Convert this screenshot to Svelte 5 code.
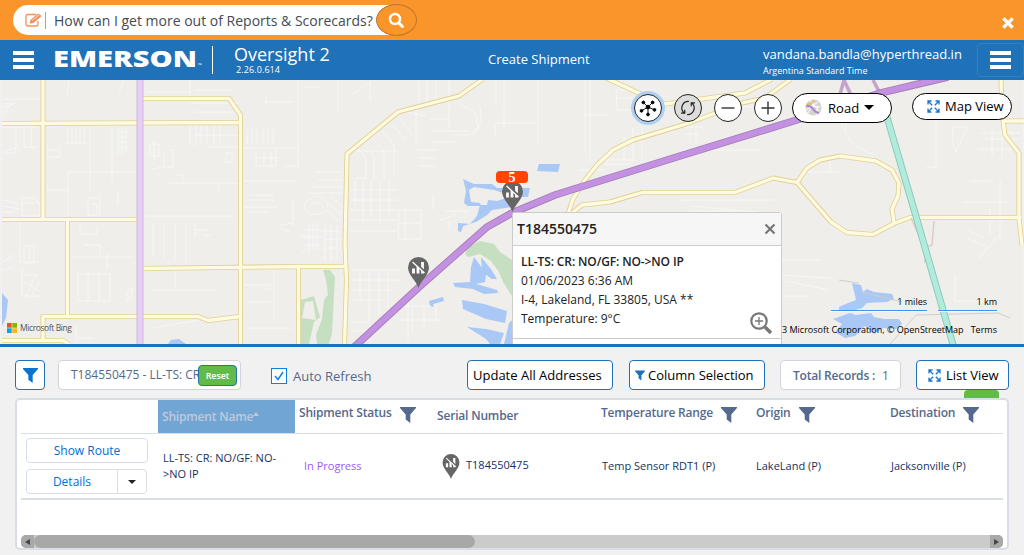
<script>
  const minor = [
    'M2 99H40M2 104L17 103M2 108L14 104M2 113L10 105M2 117L8 110M2 127H38M2 152L16 148V128M24 128V147H37M31 128V147M17 148L14 153H3',
    'M69 80L67 96M124 80L119 92M68 128V143M72 128V143M76 128V143M80 128V143M84 128V143M66 143H87M118 128V155M122 128V155M118 132H126M118 137H126M118 142H126M118 147H126M126 128V152',
    'M46 150H60V157H47M68 172H137M90 128V190M68 172V216M112 128V182M46 190H67M118 190V205M88 198H100V215H88ZM92 204H97V214M22 198H35L40 205V216H22ZM22 203H35M3 200L19 204M3 206L19 209M3 212H15',
    'M24 246H34V263H24ZM20 222V262H39M29 246V263M3 262L15 254M3 271L14 266M22 268V296H40M22 275H38M22 280L40 292M25 297L36 275M30 299L40 281M80 225V234H97V226M72 257H134M84 245H100V256M107 253V269M78 274H110V301H78ZM88 274V301M99 274V301M127 302L132 294V288L126 294ZM76 325V338H93',
    'M146 92H190M190 80V95M196 90H230M150 144H159V156H150ZM154 140V160M168 150H173V167H164V152M175 175H183V183H175M169 183H238M145 216H234M153 223V256M164 223V258M175 223V262M186 223V264M195 223V237M196 230H210M204 235H211M219 183V190M150 170L165 166M226 153H232V162H226ZM150 290H215M175 270V288M153 328L198 320',
    'M190 124V144H196V124M201 124V144M207 124V144M214 124V144M220 124V144M208 147H238M194 135H238M190 103H238M195 112H232',
    'M247 129V144M252 129V144M257 129V144M263 129V144M268 129V144M273 129V144M244 148H297M256 151V166H276V150M264 151V166M271 151V166M257 158H277M298 80V168M298 166H285M244 181H297M246 200H273M244 207H278M248 212H268M250 195H274M266 105V97M265 102H292M305 87H319M338 80V110',
    'M293 200V225M280 225L293 223M280 228L290 232M315 172H342M318 180H343M312 187H342M308 193H343M306 202C312 195 318 194 326 201C331 206 326 214 318 214C310 216 300 210 306 202M310 205C316 201 321 202 323 207M330 196L343 207M329 204L342 215M327 211L340 222',
    'M309 223V255M313 223V250M317 223V250M302 230H322M302 237H322M302 245H320M325 225V260M331 225V260M337 225V260M322 231H341M324 239H341M323 248H341M300 236H311M302 253L310 243M244 285H270M274 270V320M264 289H272M248 302H270M246 328H292',
    'M351 95L370 82V101M350 151H398M359 149L366 158V178H356M364 145L374 155V181M372 138L384 151V180M382 131L394 145V176M392 124L405 140M400 118L412 134M406 112L425 116M419 82V105M427 80V105M436 80V102M449 80V128M459 103L475 113L478 127L470 135H454M478 103C484 112 480 133 471 137',
    'M416 105V143M430 119H449M431 131H468M431 142H455M417 150H437M420 158H435M419 166H435M350 190H397M350 200H397M350 210H397M350 220H397M350 231H397M355 181V205M363 181V222M371 181V216M380 181V225M389 181V215M399 210H421V239H398ZM399 223H421M405 210V239',
    'M352 270H402M352 280H400M352 290H390M352 300H385M360 270V300M369 270V320M379 270V315M388 270V309M350 322H370M353 331H366M408 299V341M400 306H436M400 320H440M412 307V334M424 307V327M436 305V320M440 220L457 214M445 211H468M449 221V230M433 195V210',
    'M496 80V106M504 80V130M538 80V145M495 137V123H536M585 80V153M590 80V163M584 115H610M616 90H637V110H617ZM617 98H636M603 160H635M605 164H632M580 170H604M624 137V159M633 128V160M642 128V160',
    'M682 127H703M684 134H699M690 130V143M696 130V143M682 150H760M724 105L765 108M842 119C842 139 861 152 874 154M846 119V132M885 123L895 153M830 160V172M805 172H840M680 200H774M680 212L718 220M782 260H820M782 275L830 278M786 281L829 290M782 296H810',
    'M690 206L758 212M690 211H740M936 96V167H926M953 127H967L956 152L952 139ZM981 133H1020M985 139H1019M979 149H1018M992 131V156M1002 131V158M971 181H990M963 202H1009M1000 180V240M967 230L984 238M968 239L986 246M990 209V235M1000 234L978 259M955 275V301H990'
  ];
  const roads = [
    'M43 78V219M2 123.5L240 122.5M2 219.500H138M67.500 219V316M43 339V316.500H198L208 320.500L240 316.500M2 340.500H63L70 345M141 98.500H229L240.500 115V345M141 268.500L299 266.500H346M298.500 267V345M344.500 345L346.500 280L345 245L347 154L398 112L459 96L483 79',
    'M606 78L643 95L665 104L745 93L772 79M568 214L573 199L585 180L597 165L613 150L633 140L686 124L742 103L765 98L791 79M571 214L582 205L610 202L642 192.500H735L773 178L797 182.500L807 168L820 160L840 156L876 161L892 170L899 183L898 196L892 209L894 222M797 182.500L831 222L847 232.500L873 234.500L895 223L910 217.500H1021M1001 79L1002 119M1025 121H1003L1005 135L1019 153V218L1022 245'
  ];
  const columns = [
    { t: 'Shipment Status', w: 138, f: true },
    { t: 'Serial Number', w: 164, f: false },
    { t: 'Temperature Range', w: 155, f: true },
    { t: 'Origin', w: 134, f: true },
    { t: 'Destination', w: 110, f: true }
  ];
</script>

{#snippet pin()}
  <svg class="pin" viewBox="0 0 21 31"><path d="M10.500 31C9 25 0 18 0 10.500A10.500 10.500 0 0 1 21 10.500C21 18 12 25 10.500 31Z" fill="#666"/><path d="M5.500 11.500V16.500M10 9V16.500M14.500 5V16.500" stroke="#fff" stroke-width="2.800"/><path d="M5 4L18 16" stroke="#666" stroke-width="2.400"/><path d="M4.500 5L16.500 16" stroke="#fff" stroke-width="1.300"/></svg>
{/snippet}
{#snippet funnel()}
  <svg class="funnel" viewBox="0 0 16 16"><path d="M0 0H16V1L10.300 7.500V16L5.700 12.500V7.500L0 1Z" fill="currentColor"/></svg>
{/snippet}
{#snippet expand()}
  <svg class="expand" viewBox="0 0 13 13" fill="none" stroke="#1c76c4" stroke-width="1.300"><path d="M1 4.500V1H4.500M1 1L5.200 5.200M8.500 1H12V4.500M12 1L7.800 5.200M1 8.500V12H4.500M1 12L5.200 7.800M8.500 12H12V8.500M12 12L7.800 7.800"/></svg>
{/snippet}

<div class="app">
  <header class="banner">
    <div class="ask">
      <svg class="edit" viewBox="0 0 17 15" fill="none" stroke="#f5905a"><path d="M11 1.500H3Q1 1.500 1 3.500V11Q1 13 3 13H11Q13 13 13 11V8" stroke-width="1.300"/><path d="M5 10L6 7L13 1L16 3L8.500 9.500Z" fill="#f5905a"/><path d="M7 7.500L14 2" stroke="#fff" stroke-width=".7"/></svg>
      <i></i><span>How can I get more out of Reports &amp; Scorecards?</span>
    </div>
    <button class="search" aria-label="Search"><svg width="17" height="17" viewBox="0 0 17 17" fill="none" stroke="#fff"><circle cx="7" cy="7" r="5" stroke-width="2.500"/><path d="M11 11L14.500 14.500" stroke-width="3" stroke-linecap="round"/></svg></button>
    <svg class="dismiss" viewBox="0 0 12 12"><path d="M2.500 2.500L9.500 9.500M9.500 2.500L2.500 9.500" stroke="#fff" stroke-width="3.300" stroke-linecap="square"/></svg>
  </header>

  <nav>
    <div class="burger"><b></b><b></b><b></b></div>
    <svg class="logo" viewBox="0 0 150 24"><text x="-1" y="18.500" textLength="144" lengthAdjust="spacingAndGlyphs">EMERSON</text><text class="tm" x="144" y="18.500">™</text></svg>
    <div class="product"><span>Oversight 2</span><small>2.26.0.614</small></div>
    <div class="create">Create Shipment</div>
    <div class="user"><span>vandana.bandla@hyperthread.in</span><small>Argentina Standard Time</small></div>
    <div class="menu"><div class="burger"><b></b><b></b><b></b></div></div>
  </nav>

  <main class="map">
    <svg class="canvas" viewBox="0 80 1024 264" fill="none">
      <rect x="2" y="80" width="1020" height="264" fill="#efeeeb"/>
      <g stroke="#f8f7f5" stroke-width="1">{#each minor as d}<path {d}/>{/each}</g>
      <g fill="#c5dfc0">
        <path d="M323 270L330 270L335 277L334 295L333 315L332 333L329 344H317L316 335L322 319L324 300L328 295L326 280ZM301 300L314 296L317 307L320 317L314 322L309 344H300ZM305 302L302 318L316 320L313 301Z" fill-rule="evenodd"/>
        <path d="M465 254L468 247L480 241L494 244L500 252L512 260V296L503 282L499 272L491 261L480 254L468 257Z"/>
      </g>
      <g fill="#a9c8f5">
        <path d="M2 293L8 300L6 318L2 326ZM168 344L171 340L179 339L186 344ZM539 164L560 164L558 172L537 171Z"/>
        <path d="M463 179L474 184L492 184L497 188H505L503 193L494 190L474 187L469 190L471 202L480 203L481 206L468 206L464 203L466 191ZM488 200L497 201L512 196L512 207L505 208L492 210L487 215L476 222L463 226L461 232L458 231V223L470 224L477 216L480 205L487 205ZM520 188H530L528 197H519Z"/>
        <path d="M474 257L480 265L486 275L485 282L476 284L497 290L498 293L484 294L473 289L455 287L453 283L470 282L471 267ZM481 257L491 269L497 279L492 279L482 272ZM429 301L443 297L444 301L433 304L434 307L430 306ZM462 300L484 304L507 311L505 323L486 319L463 309ZM467 327L486 329L504 333L500 344H490L486 339ZM509 323L512 320V344L504 344Z"/>
        <path d="M852 283L861 285L863 292L867 289L874 292L892 294L894 299L887 302L867 303L862 308L852 311L839 310V307L848 303L856 300ZM833 319L850 313L856 315L871 313L874 317L884 319L899 319L902 324L896 329L883 328L874 334L865 326L855 336L845 338L835 332L842 324Z"/>
      </g>
      <path d="M839 280L859 283M862 292L902 302M890 344L916 315L998 313L1010 318" stroke="#d0cfcc"/>
      <g stroke-linejoin="round">
        <g stroke="#e0cf96" stroke-width="5">{#each roads as d}<path {d}/>{/each}</g>
        <g stroke="#fffbdc" stroke-width="3.300">{#each roads as d}<path {d}/>{/each}</g>
      </g>
      <path d="M140 80V344" stroke="#d2b7df" stroke-width="7"/><path d="M140 80V344" stroke="#e6cef5" stroke-width="5"/>
      <path d="M844 80L839 98M844 80L851 95M873 80L882 97" stroke="#c5a3cd" stroke-width="3.500"/>
      <path d="M911 218L925 248L932 245L934 221M925 248V263" stroke="#e0cbc4" stroke-width="1.500"/>
      <path d="M882 100L915 213L954 348" stroke="#85c8b8" stroke-width="7"/><path d="M882 100L915 213L954 348" stroke="#b1ebdc" stroke-width="5.200"/>
      <path d="M351 350L418 288L487 227L512 213L555 195L680 156L800 119L880 93L948 77" stroke="#a580b9" stroke-width="7.500"/><path d="M351 350L418 288L487 227L512 213L555 195L680 156L800 119L880 93L948 77" stroke="#c491e2" stroke-width="5.600"/>
    </svg>

    <div class="at pin-a">{@render pin()}</div>
    <div class="at pin-b">{@render pin()}</div>
    <div class="at count">5</div>

    <div class="at tools">
      <div class="round focus"><svg viewBox="0 0 28 28" stroke="#000" fill="#000"><path d="M14 13L9 8M14 13L19 8M14 13L7 17M14 13L21 16M14 13V21"/><circle cx="14" cy="13" r="2"/><circle cx="9" cy="8" r="1.500"/><circle cx="19" cy="8" r="1.500"/><circle cx="7" cy="17" r="1.500"/><circle cx="21" cy="16" r="1.500"/><circle cx="14" cy="21" r="1.500"/></svg></div>
      <div class="round grey"><svg viewBox="0 0 28 28" stroke="#222" stroke-width="1.300" fill="none"><path d="M15 7A7 7 0 0 0 9.500 19M6.500 19.500H10.500V16M13 21A7 7 0 0 0 18.500 9M21.500 8.500H17.500V12"/></svg></div>
      <div class="round"><svg viewBox="0 0 28 28" stroke="#333" stroke-width="1.500"><path d="M7 14H21"/></svg></div>
      <div class="round"><svg viewBox="0 0 28 28" stroke="#333" stroke-width="1.500"><path d="M7 14H21M14 7V21"/></svg></div>
      <div class="pill road"><svg width="17" height="17" viewBox="0 0 17 17" fill="none"><circle cx="8.500" cy="8.500" r="8" fill="#d8d2cc"/><path d="M5 1L14 12M1 11L13 3M9 1L7 7L15 8M3 14L7 8M11 16L13 7" stroke="#fff" stroke-width="1"/><path d="M2 5Q7 6 9 1" stroke="#f0b65f" stroke-width="1.800"/><path d="M1 7Q5 6 8 10T14 14" stroke="#a987cf" stroke-width="2"/></svg><span>Road</span><em></em></div>
      <div class="pill view">{@render expand()}<span>Map View</span></div>
    </div>

    <div class="at info">
      <div class="info-head"><b>T184550475</b><svg width="12" height="12" viewBox="0 0 12 12"><path d="M1.500 1.500L10.500 10.500M10.500 1.500L1.500 10.500" stroke="#777" stroke-width="2.200"/></svg></div>
      <div class="info-body">
        <strong>LL-TS: CR: NO/GF: NO-&gt;NO IP</strong><p>01/06/2023 6:36 AM</p><p>I-4, Lakeland, FL 33805, USA **</p><p>Temperature: 9°C</p>
        <svg class="zoom" viewBox="0 0 22 22" fill="none" stroke="#777"><circle cx="9" cy="9" r="7.700" stroke-width="2.200"/><path d="M5 9H13M9 5V13" stroke-width="1.300"/><path d="M15 15L21 21" stroke-width="3.500"/></svg>
      </div>
    </div>

    <div class="at bing"><svg width="10" height="10"><path fill="#f25022" d="M0 0H4.700V4.700H0z"/><path fill="#7fba00" d="M5.300 0H10V4.700H5.300z"/><path fill="#00a4ef" d="M0 5.300H4.700V10H0z"/><path fill="#ffb900" d="M5.300 5.300H10V10H5.300z"/></svg><span>Microsoft Bing</span></div>
    <div class="at scale"><span class="mi">1 miles</span><span class="km">1 km</span></div>
    <div class="at credit"><span>3 Microsoft Corporation, © OpenStreetMap</span><span>Terms</span></div>
  </main>

  <section class="panel">
    <div class="bar">
      <div class="box filter">{@render funnel()}</div>
      <div class="box field"><span>T184550475 - LL-TS: CR</span><button>Reset</button></div>
      <div class="check"><svg width="16" height="16" viewBox="0 0 16 16" fill="#fff" stroke="#0d80e4"><rect x=".5" y=".5" width="15" height="15"/><path d="M4 8L7 11.500L12 4" stroke-width="1.500"/></svg><span>Auto Refresh</span></div>
      <div class="box update">Update All Addresses</div>
      <div class="box cols">{@render funnel()}<span>Column Selection</span></div>
      <div class="box total"><b>Total Records :</b><span>1</span></div>
      <div class="box list">{@render expand()}<span>List View</span></div>
    </div>
    <div class="tab"></div>
    <div class="table">
      <div class="head">
        <div class="blank"></div>
        <div class="sorted"><span>Shipment Name</span><em></em></div>
        {#each columns as c}
          <div class="th" class:plain={!c.f} style="width:{c.w}px"><span>{c.t}</span>{#if c.f}{@render funnel()}{/if}</div>
        {/each}
      </div>
      <div class="row">
        <div class="actions"><div class="act">Show Route</div><div class="act split"><span>Details</span><i><em></em></i></div></div>
        <div class="name">LL-TS: CR: NO/GF: NO-<br>&gt;NO IP</div>
        <div class="status">In Progress</div>
        <div class="serial">{@render pin()}<span>T184550475</span></div>
        <div class="temp">Temp Sensor RDT1 (P)</div>
        <div class="origin">LakeLand (P)</div>
        <div>Jacksonville (P)</div>
      </div>
      <div class="scroll"><i class="arrow l"></i><div class="thumb"></div><i class="arrow r"></i></div>
    </div>
  </section>
</div>

<style>
  :global(body) { margin: 0; }
  * { box-sizing: border-box; }
  .app { width: 1024px; height: 555px; overflow: hidden; background: #f1f1f1; font-family: "Open Sans", sans-serif; font-size: 13px; color: #000; display: flex; flex-direction: column; white-space: nowrap; }
  svg { display: block; flex: none; }
  button { font-family: inherit; }
  .banner { height: 40px; background: #f9952b; display: flex; align-items: center; padding-left: 13px; }
  .ask { width: 380px; height: 30px; background: #fff; border-radius: 15px 0 0 15px; display: flex; align-items: center; padding-left: 12px; color: #444b52; font-size: 14px; }
  .edit { width: 17px; height: 15px; }
  .ask i { width: 1px; height: 17px; background: #f5905a; margin: 0 8px 0 3px; }
  .search { width: 41px; height: 32px; margin-left: -17px; padding: 1px 0 0 11px; border: 1px solid #bd772b; border-radius: 50%; background: #f9952b; }
  .dismiss { width: 12px; height: 12px; margin: 5px 10px 0 auto; }
  nav { height: 40px; background: #1f71b8; color: #fff; display: flex; align-items: center; padding-left: 13px; }
  .burger { width: 21px; height: 18px; display: flex; flex-direction: column; justify-content: space-between; }
  .burger b { height: 4px; background: #fff; }
  .logo { width: 150px; height: 24px; margin-left: 20px; overflow: visible; }
  .logo text { fill: #fff; font-weight: 800; font-size: 23.500px; }
  .logo .tm { font-size: 5px; font-weight: 400; }
  .product { height: 28px; border-left: 1px solid #fff; margin-left: 8px; padding-left: 21px; width: 276px; margin-top: -1px; }
  .product span { display: block; font-size: 18px; line-height: 16px; height: 18px; }
  .product small { display: block; font-size: 9px; line-height: 12px; padding-left: 2px; letter-spacing: .1px; }
  .create { width: 275px; font-size: 13px; margin-top: -2px; }
  .user { width: 214px; display: flex; flex-direction: column; }
  .user span { font-size: 13px; line-height: 17px; margin-top: 2px; }
  .user small { font-size: 9px; line-height: 15px; margin-bottom: -2px; }
  .menu { width: 47px; height: 34px; border: 1px solid #2f7fc3; border-radius: 4px; padding: 7px 0 0 12px; }
  .map { height: 264px; position: relative; overflow: hidden; }
  .canvas { width: 1024px; height: 264px; }
  .at { position: absolute; }
  .pin { width: 21px; height: 31px; }
  .pin-a { left: 502px; top: 101px; }
  .pin-b { left: 408px; top: 177px; }
  .count { left: 496px; top: 91px; width: 32px; height: 12px; border-radius: 4px; background: #ff4500; color: #fff; font: bold 14px/13px "Liberation Serif", serif; text-align: center; }
  .tools { left: 634px; top: 12px; display: flex; align-items: center; height: 31px; }
  .round { width: 28px; height: 28px; border: 1px solid #222; border-radius: 50%; background: #fff; margin-right: 12px; }
  .round svg { width: 26px; height: 26px; }
  .focus { box-shadow: 0 0 0 3px #afd0f0; }
  .grey { background: #ddd; }
  .pill { border: 1px solid #000; background: #fff; display: flex; align-items: center; }
  .road { width: 100px; height: 30px; border-radius: 15px; padding-left: 12px; margin: 0 20px 0 -2px; font-size: 13px; }
  .road span { margin: 1px 5px 0 6px; letter-spacing: .1px; }
  em { width: 0; border: 5px solid transparent; border-top-color: #000; border-bottom: 0; }
  .view { width: 100px; height: 27px; border-radius: 14px; padding-left: 14px; margin-top: -3px; font-size: 13px; }
  .view span { margin-left: 5px; }
  .expand { width: 13px; height: 13px; }
  .info { left: 512px; top: 132px; width: 270px; height: 140px; background: #fff; border: 1px solid #ccc; border-radius: 3px; }
  .info-head { height: 33px; background: #f6f6f6; border-bottom: 1px solid #ccc; display: flex; align-items: center; justify-content: space-between; padding: 0 5px 0 4px; }
  .info-head b { font-size: 14px; font-weight: 600; color: #222; line-height: 18px; margin-top: -1px; }
  .info-body { padding: 6px 8px; height: 93px; border-bottom: 1px solid #ccc; font-size: 12px; line-height: 19px; color: #222; position: relative; }
  .info-body p { margin: 0; }
  .info-body strong { display: block; font-weight: 600; letter-spacing: -.12px; }
  .zoom { position: absolute; width: 22px; height: 22px; right: 9px; top: 66px; }
  .bing { left: 7px; top: 241px; display: flex; align-items: center; gap: 3px; font-size: 8.500px; line-height: 13px; color: #555; letter-spacing: -.4px; }
  .scale { left: 831px; top: 215px; display: flex; gap: 11px; font-size: 9px; line-height: 14px; text-align: right; }
  .scale span { border-bottom: 1px solid #3d95f0; box-shadow: 0 1px #fff; height: 16px; }
  .mi { width: 96px; }
  .km { width: 59px; }
  .credit { left: 782px; top: 243px; display: flex; gap: 7px; font-size: 9px; line-height: 13px; }
  .panel { border-top: 3px solid #1f71b8; height: 211px; padding: 13px 15px 0; }
  .bar { display: flex; height: 30px; }
  .box { height: 30px; border: 1px solid #1f71b8; border-radius: 4px; background: #fff; display: flex; align-items: center; flex: none; font-size: 13px; }
  .funnel { width: 15px; height: 15px; }
  .filter { width: 30px; justify-content: center; color: #0873d1; }
  .field { width: 183px; margin-left: 13px; border-color: #d0d4dc; color: #54698d; padding-left: 12px; font-size: 12px; }
  .field span { width: 127px; margin-top: -1px; }
  .field button { width: 39px; height: 21px; flex: none; padding: 0; border: 1px solid #1f71b8; border-radius: 4px; background: #62bb46; color: #fff; font-size: 9px; font-weight: 600; letter-spacing: -.1px; position: relative; }
  .check { width: 196px; margin-left: 30px; display: flex; align-items: center; gap: 6px; color: #54698d; font-size: 13px; padding-top: 2px; }
  .update { width: 146px; padding-left: 5px; }
  .cols { width: 136px; margin-left: 16px; padding-left: 5px; }
  .cols .funnel { width: 10px; height: 11px; margin-right: 3px; color: #1f71b8; }
  .total { width: 121px; margin-left: 15px; border-color: #d0d4dc; color: #54698d; padding-left: 12px; font-size: 12px; }
  .total b { font-weight: 600; letter-spacing: -.2px; margin-right: 7px; }
  .list { width: 93px; margin-left: 15px; padding-left: 11px; }
  .list span { margin-left: 5px; }
  .tab { width: 35px; height: 8px; margin-left: 949px; border-radius: 4px 4px 0 0; background: #62bb46; }
  .table { width: 994px; height: 152px; border: 2px solid #d8dde6; border-radius: 5px; background: #fff; padding: 0 4px; }
  .head { height: 34px; border-bottom: 1px solid #d8dde6; display: flex; color: #54698d; font-size: 12px; font-weight: 600; letter-spacing: -.18px; }
  .blank { width: 137px; flex: none; }
  .sorted { width: 137px; flex: none; background: #71a6d4; color: #c0c9da; display: flex; align-items: center; padding-left: 4px; }
  .sorted em { border: 3.500px solid transparent; border-bottom: 4px solid #c0c9da; border-top: 0; margin-top: -5px; }
  .th { flex: none; display: flex; align-items: center; padding: 0 0 8px 4px; }
  .plain { padding: 0 0 2px 4px; }
  .th .funnel { width: 16px; height: 16px; margin: 4px 0 0 8px; }
  .row { height: 66px; border-bottom: 2px solid #d8dde6; display: flex; align-items: center; color: #16325c; font-size: 11px; line-height: 16px; }
  .actions { width: 142px; padding-left: 5px; display: flex; flex-direction: column; gap: 6px; }
  .act { width: 122px; height: 25px; border: 1px solid #d8dde6; border-radius: 4px; color: #0070d2; font-size: 12px; line-height: 23px; text-align: center; }
  .split { width: 121px; display: flex; }
  .split span { width: 91px; border-right: 1px solid #d8dde6; }
  .split i { flex: 1; display: flex; align-items: center; justify-content: center; }
  .split em { border-width: 4px 4px 0; border-top-color: #222; }
  .name { width: 141px; }
  .status { width: 138px; color: #9d5cf0; }
  .serial { width: 160px; display: flex; align-items: center; gap: 6px; }
  .serial .pin { width: 18px; height: 25px; }
  .serial span { margin-top: -2px; }
  .temp { width: 154px; }
  .origin { width: 135px; }
  .scroll { height: 13px; margin-top: 35px; border-radius: 5px; overflow: hidden; background: #cbcbcb; display: flex; }
  .thumb { width: 441px; background: #a8a8a8; border-radius: 7px; }
  .arrow { width: 13px; background: #a8a8a8; display: flex; align-items: center; justify-content: center; }
  .arrow::before { content: ""; border: 3.500px solid transparent; border-right: 5px solid #444; border-left: 0; }
  .r { margin-left: auto; transform: scaleX(-1); }
</style>
